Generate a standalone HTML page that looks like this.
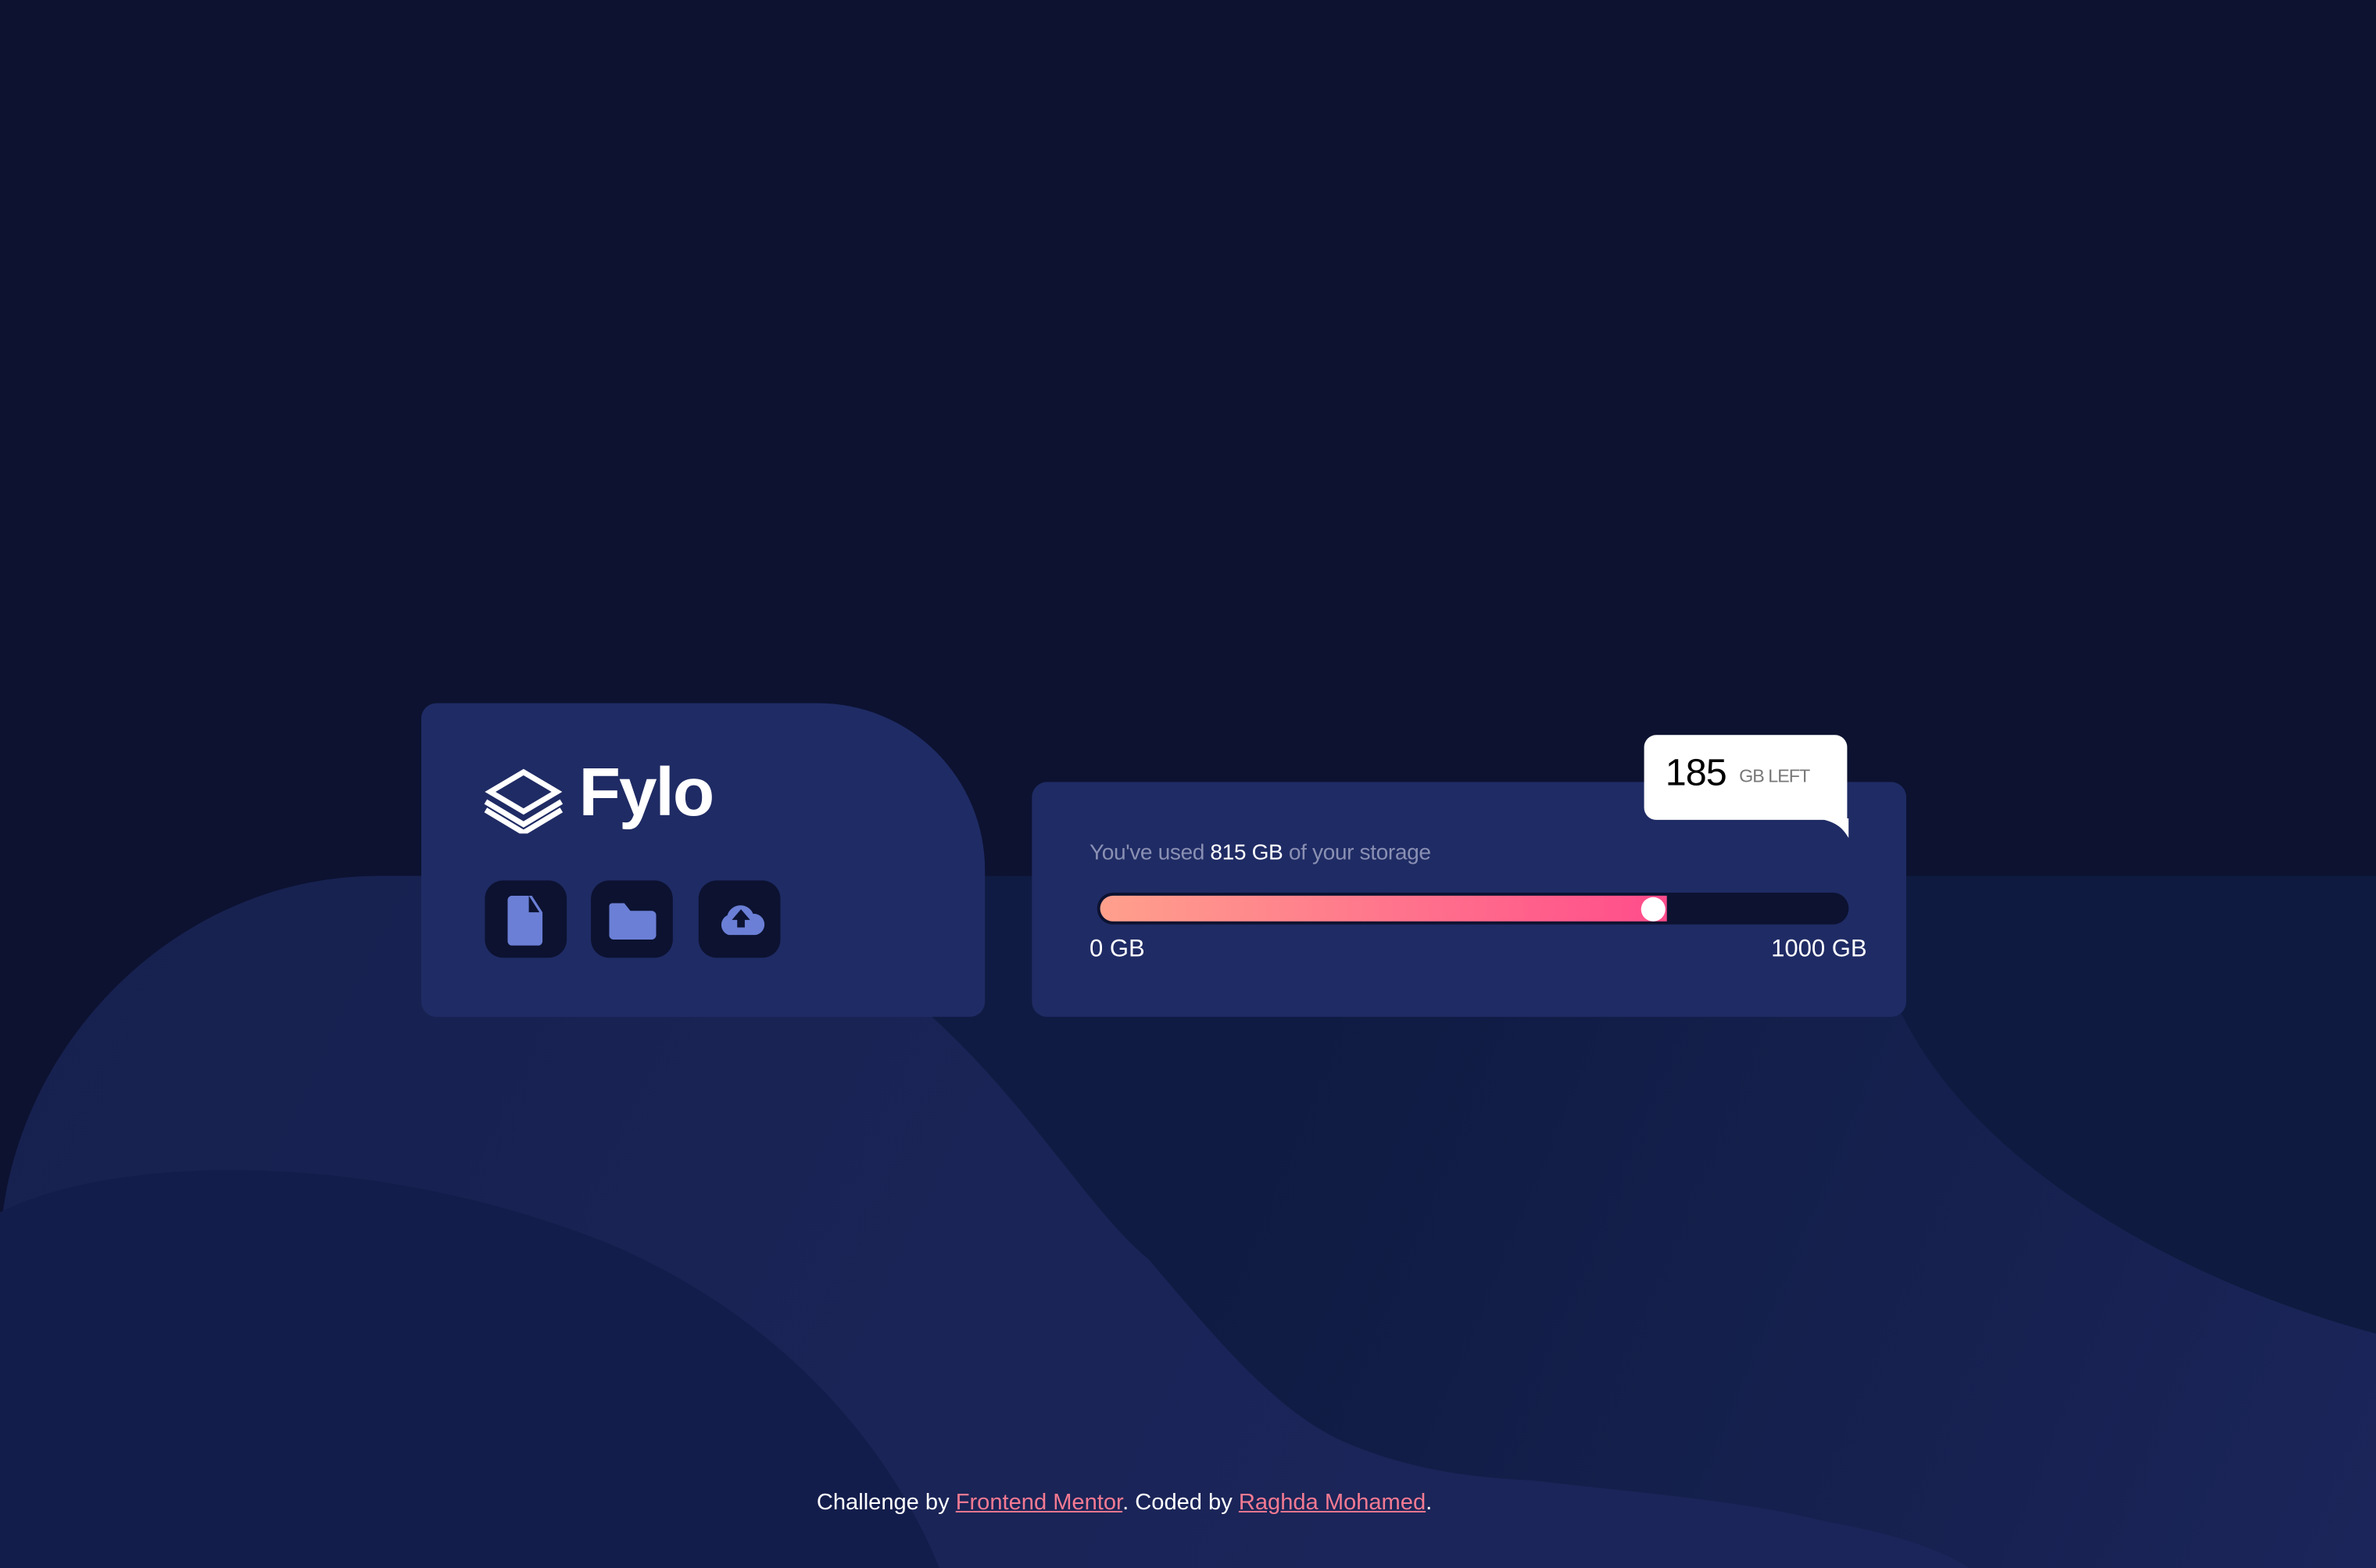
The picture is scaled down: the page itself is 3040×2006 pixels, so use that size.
<!DOCTYPE html>
<html><head><meta charset="utf-8"><style>
html,body{margin:0;padding:0;background:#0c1230;overflow:hidden}
#s{position:relative;width:1568px;height:1035px;transform:scale(1.93878);transform-origin:0 0;font-family:"Liberation Sans",sans-serif}
.card{position:absolute;background:#1f2b64}
.btn{position:absolute;top:581px;width:54px;height:51px;background:#0c1230;border-radius:12px}
</style></head><body><div id="s">
<svg width="1568" height="1035" style="position:absolute;left:0;top:0">
<defs>
<linearGradient id="gm" gradientUnits="userSpaceOnUse" x1="850" y1="700" x2="1568" y2="1000"><stop offset="0" stop-color="#0f1b42"/><stop offset="1" stop-color="#1b2559"/></linearGradient>
<linearGradient id="gl" gradientUnits="userSpaceOnUse" x1="0" y1="600" x2="900" y2="1035"><stop offset="0" stop-color="#17214f"/><stop offset="1" stop-color="#1b2559"/></linearGradient>
</defs>
<path d="M0 1035 L0 830 C0 700 110 578 250 578 L1568 578 L1568 1035 Z" fill="url(#gm)"/>
<path d="M1256 671 C1300 760 1420 840 1568 880 L1568 578 L1200 578 Z" fill="#0e1a3f"/>
<path d="M0 830 C0 700 110 578 250 578 L600 578 L615 671 C680 730 720 800 758 831 C800 880 840 930 886 951 C930 970 970 975 1013 977 C1080 985 1150 990 1205 1004 C1250 1012 1280 1022 1300 1035 L0 1035 Z" fill="url(#gl)"/>
<path d="M0 800 C80 760 250 760 400 820 C520 870 590 960 620 1035 L0 1035 Z" fill="#131d4b"/>
</svg>
<div class="card" style="left:278px;top:464px;width:372px;height:207px;border-radius:10px 110px 10px 10px"></div>
<svg style="position:absolute;left:319px;top:507px" width="53" height="43" viewBox="0 0 53 43" fill="none" stroke="#fff" stroke-width="3.6">
<path d="M26.5 2.5 L48.5 15.5 L26.5 28.5 L4.5 15.5 Z"/>
<path d="M1.5 22 L26.5 37 L51.5 22"/>
<path d="M1.5 27.5 L26.5 42.5 L51.5 27.5"/>
</svg>
<div style="position:absolute;left:382px;top:497px;font-size:45px;font-weight:bold;color:#fff;letter-spacing:-1px">Fylo</div>
<div class="btn" style="left:320px"><svg style="position:absolute;left:15px;top:10px" width="25" height="33"><path d="M3 0 H16 L23 11 V30 A3 3 0 0 1 20 33 H3 A3 3 0 0 1 0 30 V3 A3 3 0 0 1 3 0Z" fill="#6b7fd6"/><path d="M14 0 V11 H21 Z" fill="#0c1230"/></svg></div>
<div class="btn" style="left:390px"><svg style="position:absolute;left:12px;top:15px" width="32" height="24"><path d="M2 0 H10 L14 5 H28 A3 3 0 0 1 31 8 V21 A3 3 0 0 1 28 24 H3 A3 3 0 0 1 0 21 V2 A2 2 0 0 1 2 0Z" fill="#6b7fd6"/></svg></div>
<div class="btn" style="left:461px"><svg style="position:absolute;left:12px;top:14px" width="32" height="22" viewBox="0 0 32 22"><path d="M8 22 A7 7 0 0 1 7 9 A9 9 0 0 1 24 8 A7 7 0 0 1 25 22 Z" fill="#6b7fd6"/><path d="M16 5 L22 12 H18.5 V17 H13.5 V12 H10 Z" fill="#0c1230"/></svg></div>
<div class="card" style="left:681px;top:516px;width:577px;height:155px;border-radius:10px"></div>
<div style="position:absolute;left:1085px;top:485px;width:134px;height:56px;background:#fff;border-radius:8px 8px 0 8px"></div>
<svg style="position:absolute;left:1199px;top:540px" width="21" height="13"><path d="M0 0 H21 V13 C18 8 14 2 0 0Z" fill="#fff"/></svg>
<div style="position:absolute;left:1099px;top:496px;font-size:25px;color:#000;letter-spacing:-0.5px">185 <span style="font-size:12px;color:#777;letter-spacing:-0.5px;vertical-align:2px;margin-left:2px">GB LEFT</span></div>
<div style="position:absolute;left:719px;top:555px;font-size:14.5px;color:#8a90b3;letter-spacing:-0.2px">You've used <span style="color:#fff">815 GB</span> of your storage</div>
<div style="position:absolute;left:724px;top:589px;width:496px;height:21px;background:#0c1230;border-radius:11px"></div>
<div style="position:absolute;left:726px;top:591px;width:374px;height:17px;background:linear-gradient(90deg,#ffa08c,#ff4c8b);border-radius:9px 0 0 9px"></div>
<div style="position:absolute;left:1083px;top:592px;width:16px;height:16px;background:#fff;border-radius:50%"></div>
<div style="position:absolute;left:719px;top:618px;font-size:16px;color:#fff">0 GB</div>
<div style="position:absolute;left:1132px;width:100px;text-align:right;top:618px;font-size:16px;color:#fff">1000 GB</div>
<div style="position:absolute;left:0;width:1484px;text-align:center;top:983px;font-size:15px;color:#fff">Challenge by <u style="color:#f57a92">Frontend Mentor</u>. Coded by <u style="color:#f57a92">Raghda Mohamed</u>.</div>
</div></body></html>
